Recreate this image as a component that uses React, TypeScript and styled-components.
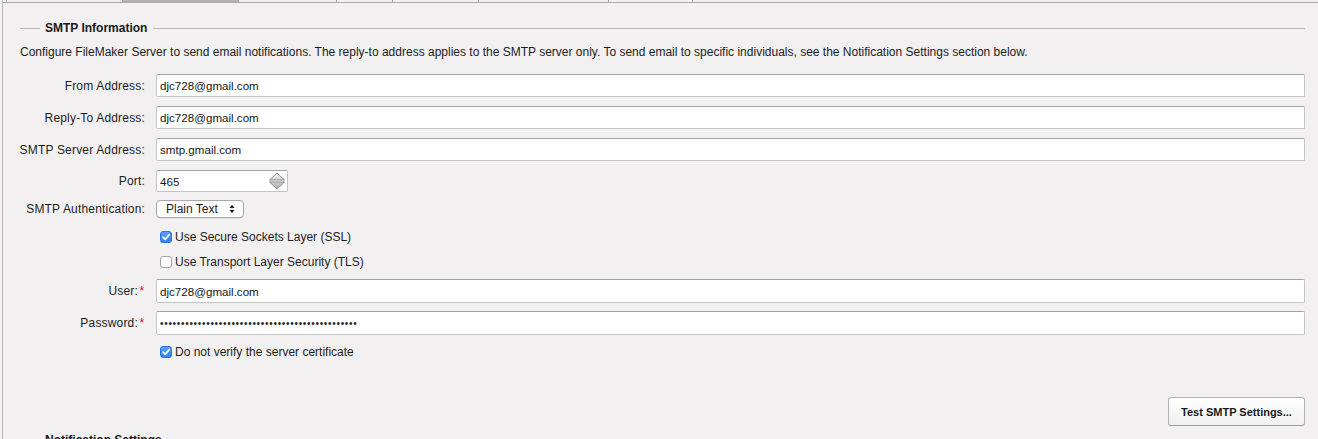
import React from "react";
import styled, { createGlobalStyle } from "styled-components";

const Global = createGlobalStyle`
  html, body { margin: 0; padding: 0; background: #f2f0f0; }
  body {
    font-family: "Liberation Sans", Arial, Helvetica, sans-serif;
    color: #1d1d1d;
    overflow: hidden;
  }
  * { box-sizing: border-box; }
`;

const Frame = styled.div`
  width: 1318px;
  height: 439px;
  overflow: hidden;
  padding-left: 2px;
`;

const Inner = styled.div`
  height: 100%;
  border-left: 1px solid #b9b9b9;
`;

const TabStrip = styled.div`
  display: flex;
  height: 3px;
`;

const Tab = styled.div<{ $w?: number; $selected?: boolean; $last?: boolean }>`
  flex: ${(p) => (p.$w ? `0 0 ${p.$w}px` : "1 1 auto")};
  height: 3px;
  background: ${(p) => (p.$selected ? "#b3b3b3" : "transparent")};
  border-bottom: 1px solid #a9a9a9;
  border-right: ${(p) => (p.$last ? "none" : "1px solid #a9a9a9")};
`;

const Section = styled.div`
  padding: 0 13px 0 17px;
`;

const Legend = styled.div<{ $mt: number }>`
  display: flex;
  align-items: center;
  height: 14px;
  margin-top: ${(p) => p.$mt}px;
`;

const LegendLine = styled.div<{ $w?: number }>`
  flex: ${(p) => (p.$w ? `0 0 ${p.$w}px` : "1 1 auto")};
  height: 1px;
  background: #b8b8b8;
`;

const LegendText = styled.span`
  font-size: 12px;
  font-weight: bold;
  line-height: 14px;
  padding: 0 6px 0 5px;
  color: #1a1a1a;
`;

const Description = styled.p`
  margin: 10px 0 0;
  font-size: 12px;
  line-height: 14px;
  white-space: nowrap;
`;

const Form = styled.div`
  display: flex;
  flex-direction: column;
  margin-left: -17px;
`;

const Row = styled.div<{ $h: number; $mt: number }>`
  display: grid;
  grid-template-columns: 143px 1fr;
  column-gap: 10px;
  align-items: center;
  height: ${(p) => p.$h}px;
  margin-top: ${(p) => p.$mt}px;
`;

const Label = styled.label<{ $req?: boolean }>`
  font-size: 12px;
  line-height: 14px;
  letter-spacing: 0.18px;
  text-align: right;
  padding-right: ${(p) => (p.$req ? "0" : "1px")};
  white-space: nowrap;
`;

const Req = styled.span`
  color: #d2132a;
  display: inline-block;
  width: 8px;
  text-align: center;
`;

const Field = styled.div<{ $w?: number }>`
  position: relative;
  height: 100%;
  width: ${(p) => (p.$w ? `${p.$w}px` : "100%")};
  background: #fff;
  border: 1px solid #c4c4c4;
  border-top-color: #a2a2a2;
  border-radius: 2px;
  display: flex;
  align-items: center;
  padding-left: 3px;
  font-size: 11.6px;
  color: #151515;
`;

const Dots = styled.span`
  font-size: 10px;
  letter-spacing: 0.7px;
  color: #222;
`;

const Spinner = styled.svg`
  position: absolute;
  right: 1px;
  top: 0;
`;

const Select = styled.div`
  width: 88px;
  height: 18px;
  background: #fff;
  border: 1px solid #a9a9a9;
  border-radius: 4px;
  display: flex;
  align-items: center;
  justify-content: space-between;
  padding: 0 8px 0 9px;
  font-size: 12px;
  box-shadow: 0 1px 0 rgba(0, 0, 0, 0.05);
`;

const CheckRow = styled.div`
  display: flex;
  align-items: center;
  gap: 3px;
  padding-left: 4px;
  font-size: 12px;
  line-height: 14px;
`;

const Box = styled.span<{ $on?: boolean }>`
  width: 12px;
  height: 12px;
  border-radius: 3px;
  display: inline-flex;
  align-items: center;
  justify-content: center;
  background: ${(p) => (p.$on ? "linear-gradient(#5aa0fb, #2f80f4)" : "#fff")};
  border: 1px solid ${(p) => (p.$on ? "#2c74e0" : "#a5a5a5")};
`;

const ButtonRow = styled.div`
  display: flex;
  justify-content: flex-end;
  margin-top: 36px;
`;

const Button = styled.button`
  width: 137px;
  height: 29px;
  border: 1px solid #b1b1b1;
  border-bottom-color: #9d9d9d;
  border-radius: 3px;
  background: linear-gradient(#ffffff, #f0f0f0);
  font-family: "Liberation Sans", Arial, sans-serif;
  font-weight: bold;
  font-size: 11px;
  color: #1a1a1a;
  padding: 0;
`;

const Check = () => (
  <svg width="10" height="10" viewBox="0 0 10 10">
    <path d="M2 5.2 L4.2 7.4 L8.2 2.6" fill="none" stroke="#fff" strokeWidth="1.7" strokeLinecap="round" strokeLinejoin="round" />
  </svg>
);

const Checkbox = ({ on, children }: { on?: boolean; children: React.ReactNode }) => (
  <CheckRow>
    <Box $on={on}>{on && <Check />}</Box>
    <span>{children}</span>
  </CheckRow>
);

const tabs = [
  { w: 4 },
  { w: 116 },
  { w: 116, selected: true },
  { w: 98 },
  { w: 56 },
  { w: 86 },
  { w: 130 },
  { w: 84 },
  { last: true },
];

const TextRow = ({ label, value, mt }: { label: string; value: string; mt: number }) => (
  <Row $h={23} $mt={mt}>
    <Label>{label}</Label>
    <Field>{value}</Field>
  </Row>
);

export default function App() {
  return (
    <>
      <Global />
      <Frame>
        <Inner>
          <TabStrip>
            {tabs.map((t, i) => (
              <Tab key={i} $w={t.w} $selected={t.selected} $last={t.last} />
            ))}
          </TabStrip>
          <Section>
            <Legend $mt={18}>
              <LegendLine $w={20} />
              <LegendText>SMTP Information</LegendText>
              <LegendLine />
            </Legend>
            <Description>
              Configure FileMaker Server to send email notifications. The reply-to address applies to the SMTP server only. To send email to specific individuals, see the Notification Settings section below.
            </Description>
            <Form>
              <TextRow label="From Address:" value="djc728@gmail.com" mt={15} />
              <TextRow label="Reply-To Address:" value="djc728@gmail.com" mt={9} />
              <TextRow label="SMTP Server Address:" value="smtp.gmail.com" mt={9} />
              <Row $h={22} $mt={9}>
                <Label>Port:</Label>
                <Field $w={132}>
                  465
                  <Spinner width="18" height="20" viewBox="0 0 18 20">
                    <defs>
                      <linearGradient id="spUp" x1="0" y1="0" x2="0" y2="1">
                        <stop offset="0" stopColor="#f4f4f4" />
                        <stop offset="1" stopColor="#d2d2d2" />
                      </linearGradient>
                      <linearGradient id="spDn" x1="0" y1="0" x2="0" y2="1">
                        <stop offset="0" stopColor="#d0d0d0" />
                        <stop offset="1" stopColor="#a9a9a9" />
                      </linearGradient>
                    </defs>
                    <path d="M1.5 9 L9 2 L16.5 9 Z" fill="url(#spUp)" stroke="#8a8a8a" strokeWidth="1" strokeLinejoin="round" />
                    <path d="M1.5 11 L16.5 11 L9 18 Z" fill="url(#spDn)" stroke="#8a8a8a" strokeWidth="1" strokeLinejoin="round" />
                  </Spinner>
                </Field>
              </Row>
              <Row $h={18} $mt={8}>
                <Label>SMTP Authentication:</Label>
                <Select>
                  <span>Plain Text</span>
                  <svg width="6" height="10" viewBox="0 0 6 10">
                    <path d="M0.5 4 L3 0.8 L5.5 4 Z" fill="#222" />
                    <path d="M0.5 6 L5.5 6 L3 9.2 Z" fill="#222" />
                  </svg>
                </Select>
              </Row>
              <Row $h={18} $mt={10}>
                <span />
                <Checkbox on>Use Secure Sockets Layer (SSL)</Checkbox>
              </Row>
              <Row $h={18} $mt={7}>
                <span />
                <Checkbox>Use Transport Layer Security (TLS)</Checkbox>
              </Row>
              <Row $h={24} $mt={8}>
                <Label $req>
                  User:<Req>*</Req>
                </Label>
                <Field>djc728@gmail.com</Field>
              </Row>
              <Row $h={24} $mt={8}>
                <Label $req>
                  Password:<Req>*</Req>
                </Label>
                <Field>
                  <Dots>{"•".repeat(47)}</Dots>
                </Field>
              </Row>
              <Row $h={18} $mt={8}>
                <span />
                <Checkbox on>Do not verify the server certificate</Checkbox>
              </Row>
            </Form>
            <ButtonRow>
              <Button>Test SMTP Settings...</Button>
            </ButtonRow>
            <Legend $mt={7}>
              <LegendLine $w={20} />
              <LegendText>Notification Settings</LegendText>
              <LegendLine />
            </Legend>
          </Section>
        </Inner>
      </Frame>
    </>
  );
}
